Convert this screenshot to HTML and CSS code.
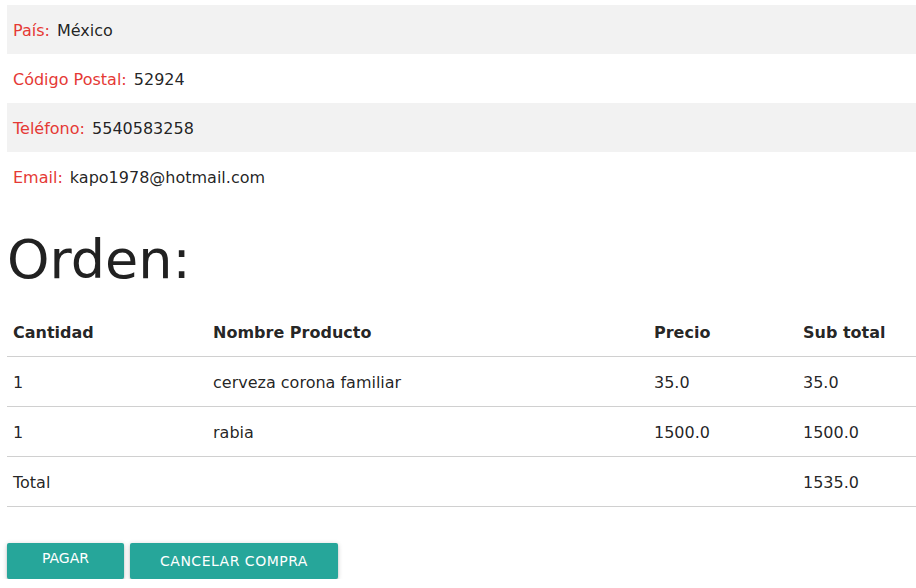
FILE: index.html
```html
<!DOCTYPE html>
<html lang="es">
<head>
<meta charset="utf-8">
<title>Orden</title>
<link rel="stylesheet" href="styles.css">
</head>
<body>
<div class="page">
  <ul class="info">
    <li class="info-row alt"><span class="label">País:</span> México</li>
    <li class="info-row"><span class="label">Código Postal:</span> 52924</li>
    <li class="info-row alt"><span class="label">Teléfono:</span> 5540583258</li>
    <li class="info-row"><span class="label">Email:</span> kapo1978@hotmail.com</li>
  </ul>
  <h3 class="title">Orden:</h3>
  <table class="order">
    <colgroup>
      <col class="c1"><col class="c2"><col class="c3"><col class="c4">
    </colgroup>
    <thead>
      <tr><th>Cantidad</th><th>Nombre Producto</th><th>Precio</th><th>Sub total</th></tr>
    </thead>
    <tbody>
      <tr><td>1</td><td>cerveza corona familiar</td><td>35.0</td><td>35.0</td></tr>
      <tr><td>1</td><td>rabia</td><td>1500.0</td><td>1500.0</td></tr>
      <tr><td>Total</td><td></td><td></td><td>1535.0</td></tr>
    </tbody>
  </table>
  <div class="actions">
    <button class="btn btn-pay">PAGAR</button>
    <button class="btn btn-cancel">CANCELAR COMPRA</button>
  </div>
</div>
</body>
</html>
```

FILE: styles.css
```css
html, body {
  margin: 0;
  padding: 0;
  background: #ffffff;
}
body {
  font-family: "DejaVu Sans", Verdana, sans-serif;
  font-size: 16px;
  color: rgba(0, 0, 0, 0.87);
}
.page {
  padding: 5px 0 0 7px;
}
.info {
  list-style: none;
  margin: 0;
  padding: 0;
}
.info-row {
  box-sizing: border-box;
  height: 49px;
  line-height: 47px;
  padding: 2px 0 0 6px;
  white-space: nowrap;
}
.info-row.alt {
  background: #f2f2f2;
}
.label {
  color: #e53935;
  margin-right: 2px;
}
.title {
  font-size: 54px;
  font-weight: 400;
  line-height: 59px;
  margin: 29px 0 18px 0;
  color: #212121;
}
.order {
  width: 909px;
  border-collapse: collapse;
  table-layout: fixed;
}
.c1 { width: 200px; }
.c2 { width: 441px; }
.c3 { width: 149px; }
.c4 { width: 119px; }
.order th, .order td {
  text-align: left;
  padding: 2px 6px 0 6px;
  height: 47px;
  vertical-align: middle;
  white-space: nowrap;
}
.order th {
  font-weight: 700;
}
.order tr {
  border-bottom: 1px solid #d0d0d0;
}
.actions {
  display: flex;
  gap: 6px;
  margin-top: 36px;
}
.btn {
  border: none;
  border-radius: 2px;
  background: #26a69a;
  color: #ffffff;
  font-family: "DejaVu Sans", Verdana, sans-serif;
  font-size: 14px;
  height: 36px;
  box-shadow: 0 2px 2px 0 rgba(0,0,0,0.14), 0 3px 1px -2px rgba(0,0,0,0.12), 0 1px 5px 0 rgba(0,0,0,0.2);
}
.btn-pay {
  width: 117px;
  padding: 0 0 7px 0;
}
.btn-cancel {
  width: 208px;
  letter-spacing: 0.5px;
  padding: 0;
}
```
